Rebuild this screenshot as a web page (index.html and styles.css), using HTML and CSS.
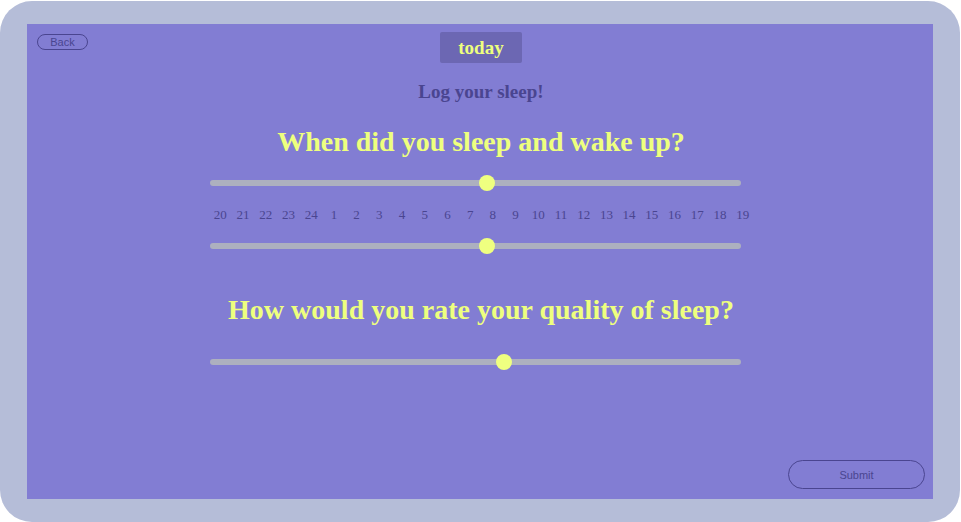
FILE: index.html
```html
<!DOCTYPE html>
<html>
<head>
<meta charset="utf-8">
<link rel="stylesheet" href="styles.css">
</head>
<body>
<div class="frame">
  <main class="screen">
    <header class="top">
      <button class="pill back">Back</button>
      <div class="today">today</div>
      <span></span>
    </header>
    <h2 class="log">Log your sleep!</h2>
    <h1 class="question q1">When did you sleep and wake up?</h1>
    <div class="slider s1"><div class="track"></div><div class="thumb" style="left:52.2%"></div></div>
    <div class="hours">
      <span>20</span><span>21</span><span>22</span><span>23</span><span>24</span><span>1</span><span>2</span><span>3</span><span>4</span><span>5</span><span>6</span><span>7</span><span>8</span><span>9</span><span>10</span><span>11</span><span>12</span><span>13</span><span>14</span><span>15</span><span>16</span><span>17</span><span>18</span><span>19</span>
    </div>
    <div class="slider s2"><div class="track"></div><div class="thumb" style="left:52.2%"></div></div>
    <h1 class="question q2">How would you rate your quality of sleep?</h1>
    <div class="slider s3"><div class="track"></div><div class="thumb" style="left:55.4%"></div></div>
    <footer class="bottom">
      <button class="pill submit">Submit</button>
    </footer>
  </main>
</div>
</body>
</html>
```

FILE: styles.css
```css
html, body {
  margin: 0;
  padding: 0;
  background: #ffffff;
}
body {
  width: 961px;
  height: 522px;
  overflow: hidden;
}
.frame {
  box-sizing: border-box;
  width: 960px;
  height: 521px;
  margin-top: 1px;
  background: #b5bdd8;
  border-radius: 32px;
  padding: 23px 27px 23px 27px;
}
.screen {
  box-sizing: border-box;
  height: 475px;
  background: #827dd3;
  display: flex;
  flex-direction: column;
  align-items: center;
  padding: 8px 8px 10px 10px;
}
.top {
  width: 100%;
  display: grid;
  grid-template-columns: 1fr auto 1fr;
  align-items: start;
}
.pill {
  font-family: "Liberation Sans", Arial, sans-serif;
  color: #4a4590;
  background: transparent;
  border: 1px solid #4a4590;
  border-radius: 999px;
  padding: 0;
  cursor: pointer;
}
.back {
  justify-self: start;
  margin-top: 2px;
  width: 51px;
  height: 16px;
  font-size: 11px;
  line-height: 14px;
}
.today {
  width: 82px;
  height: 31px;
  background: #6c67b3;
  border-radius: 2px;
  color: #eeff7e;
  font-family: "Liberation Serif", "Times New Roman", serif;
  font-weight: bold;
  font-size: 19px;
  line-height: 31px;
  text-align: center;
}
.log {
  margin: 18px 0 0 0;
  font-family: "Liberation Serif", "Times New Roman", serif;
  font-weight: bold;
  font-size: 19px;
  line-height: 21px;
  color: #4a4590;
}
.question {
  margin: 0;
  font-family: "Liberation Serif", "Times New Roman", serif;
  font-weight: bold;
  font-size: 28px;
  line-height: 32px;
  color: #eeff7e;
}
.q1 { margin-top: 24px; }
.q2 { margin-top: 40px; }
.slider {
  position: relative;
  width: 531px;
  height: 16px;
  margin-left: -11px;
}
.s1 { margin-top: 17px; }
.s2 { margin-top: 16px; }
.s3 { margin-top: 28px; }
.track {
  position: absolute;
  left: 0;
  right: 0;
  top: 5px;
  height: 6px;
  border-radius: 3px;
  background: #adb0bf;
}
.thumb {
  position: absolute;
  top: 0;
  width: 16px;
  height: 16px;
  margin-left: -8px;
  border-radius: 50%;
  background: #efff80;
}
.hours {
  width: 545px;
  margin-top: 16px;
  margin-left: 1px;
  display: grid;
  grid-template-columns: repeat(24, 1fr);
  text-align: center;
  font-family: "Liberation Serif", "Times New Roman", serif;
  font-size: 13px;
  line-height: 15px;
  color: #4a4590;
}
.bottom {
  margin-top: auto;
  align-self: stretch;
  display: flex;
  justify-content: flex-end;
}
.submit {
  width: 137px;
  height: 29px;
  font-size: 11px;
}
```
